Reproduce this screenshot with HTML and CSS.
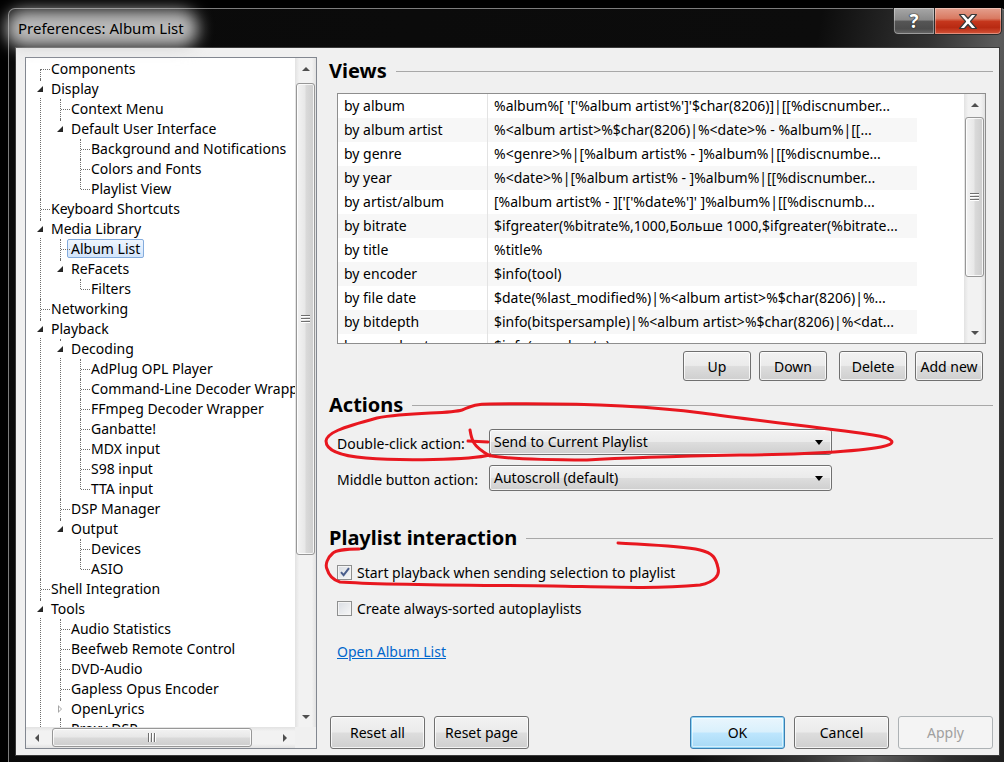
FILE: index.html
```html
<!DOCTYPE html>
<html lang="en">
<head>
    <meta charset="UTF-8">
    <title>Preferences: Album List</title>
    <link rel="stylesheet" href="styles.css">
</head>
<body>
<div class="window">
    <div class="titlebar">
        <div class="caption"><span>Preferences: Album List</span></div>
        <div class="capbtns">
            <div class="cb help">?</div>
            <div class="cb close">
                <svg width="20" height="17" viewBox="0 0 20 17"><path d="M1.5 1.5h5l3.5 4 3.5-4h5l-6 7 6 7h-5l-3.5-4-3.5 4h-5l6-7z" fill="#fff" stroke="#3a3a3a" stroke-width="1.2" stroke-linejoin="round"/></svg>
            </div>
        </div>
    </div>
    <div class="client">
        <!-- page tree -->
        <div class="tree">
            <div class="tree-view">
                <ul class="root">
                    <li><div class="row leaf"><span class="lbl">Components</span></div></li>
                    <li><div class="row"><i class="tw open"></i><span class="lbl">Display</span></div>
                        <ul>
                            <li><div class="row leaf"><span class="lbl">Context Menu</span></div></li>
                            <li><div class="row"><i class="tw open"></i><span class="lbl">Default User Interface</span></div>
                                <ul>
                                    <li><div class="row leaf"><span class="lbl">Background and Notifications</span></div></li>
                                    <li><div class="row leaf"><span class="lbl">Colors and Fonts</span></div></li>
                                    <li><div class="row leaf"><span class="lbl">Playlist View</span></div></li>
                                </ul>
                            </li>
                        </ul>
                    </li>
                    <li><div class="row leaf"><span class="lbl">Keyboard Shortcuts</span></div></li>
                    <li><div class="row"><i class="tw open"></i><span class="lbl">Media Library</span></div>
                        <ul>
                            <li><div class="row leaf"><span class="lbl selected">Album List</span></div></li>
                            <li><div class="row"><i class="tw open"></i><span class="lbl">ReFacets</span></div>
                                <ul>
                                    <li><div class="row leaf"><span class="lbl">Filters</span></div></li>
                                </ul>
                            </li>
                        </ul>
                    </li>
                    <li><div class="row leaf"><span class="lbl">Networking</span></div></li>
                    <li><div class="row"><i class="tw open"></i><span class="lbl">Playback</span></div>
                        <ul>
                            <li><div class="row"><i class="tw open"></i><span class="lbl">Decoding</span></div>
                                <ul>
                                    <li><div class="row leaf"><span class="lbl">AdPlug OPL Player</span></div></li>
                                    <li><div class="row leaf"><span class="lbl">Command-Line Decoder Wrapper</span></div></li>
                                    <li><div class="row leaf"><span class="lbl">FFmpeg Decoder Wrapper</span></div></li>
                                    <li><div class="row leaf"><span class="lbl">Ganbatte!</span></div></li>
                                    <li><div class="row leaf"><span class="lbl">MDX input</span></div></li>
                                    <li><div class="row leaf"><span class="lbl">S98 input</span></div></li>
                                    <li><div class="row leaf"><span class="lbl">TTA input</span></div></li>
                                </ul>
                            </li>
                            <li><div class="row leaf"><span class="lbl">DSP Manager</span></div></li>
                            <li><div class="row"><i class="tw open"></i><span class="lbl">Output</span></div>
                                <ul>
                                    <li><div class="row leaf"><span class="lbl">Devices</span></div></li>
                                    <li><div class="row leaf"><span class="lbl">ASIO</span></div></li>
                                </ul>
                            </li>
                        </ul>
                    </li>
                    <li><div class="row leaf"><span class="lbl">Shell Integration</span></div></li>
                    <li><div class="row"><i class="tw open"></i><span class="lbl">Tools</span></div>
                        <ul>
                            <li><div class="row leaf"><span class="lbl">Audio Statistics</span></div></li>
                            <li><div class="row leaf"><span class="lbl">Beefweb Remote Control</span></div></li>
                            <li><div class="row leaf"><span class="lbl">DVD-Audio</span></div></li>
                            <li><div class="row leaf"><span class="lbl">Gapless Opus Encoder</span></div></li>
                            <li><div class="row"><i class="tw shut"></i><span class="lbl">OpenLyrics</span></div></li>
                            <li><div class="row leaf"><span class="lbl">Proxy DSP</span></div></li>
                            <li><div class="row leaf"><span class="lbl">Waveform Seekbar</span></div></li>
                        </ul>
                    </li>
                    <li><div class="row leaf"><span class="lbl">Visualizations</span></div></li>
                </ul>
            </div>
            <div class="sbv tree-sb">
                <div class="arr"><i class="tri up"></i></div>
                <div class="track"><div class="thumb"><i class="grip"></i></div></div>
                <div class="arr"><i class="tri down"></i></div>
            </div>
            <div class="sbh">
                <div class="arr"><i class="tri left"></i></div>
                <div class="track"><div class="thumb"><i class="grip"></i></div></div>
                <div class="arr"><i class="tri right"></i></div>
            </div>
            <div class="sb-corner"></div>
        </div>

        <!-- Album List page -->
        <div class="page">
            <div class="group-title">Views</div>
            <div class="views">
                <div class="views-rows">
                    <div class="lrow"><span class="c1">by album</span><span class="c2">%album%[ '['%album artist%']'$char(8206)]|[[%discnumber...</span></div>
                    <div class="lrow"><span class="c1">by album artist</span><span class="c2">%&lt;album artist&gt;%$char(8206)|%&lt;date&gt;% - %album%|[[...</span></div>
                    <div class="lrow"><span class="c1">by genre</span><span class="c2">%&lt;genre&gt;%|[%album artist% - ]%album%|[[%discnumbe...</span></div>
                    <div class="lrow"><span class="c1">by year</span><span class="c2">%&lt;date&gt;%|[%album artist% - ]%album%|[[%discnumber...</span></div>
                    <div class="lrow"><span class="c1">by artist/album</span><span class="c2">[%album artist% - ]['['%date%']' ]%album%|[[%discnumb...</span></div>
                    <div class="lrow"><span class="c1">by bitrate</span><span class="c2">$ifgreater(%bitrate%,1000,Больше 1000,$ifgreater(%bitrate...</span></div>
                    <div class="lrow"><span class="c1">by title</span><span class="c2">%title%</span></div>
                    <div class="lrow"><span class="c1">by encoder</span><span class="c2">$info(tool)</span></div>
                    <div class="lrow"><span class="c1">by file date</span><span class="c2">$date(%last_modified%)|%&lt;album artist&gt;%$char(8206)|%...</span></div>
                    <div class="lrow"><span class="c1">by bitdepth</span><span class="c2">$info(bitspersample)|%&lt;album artist&gt;%$char(8206)|%&lt;dat...</span></div>
                    <div class="lrow"><span class="c1">by samplerate</span><span class="c2">$info(samplerate)</span></div>
                </div>
                <div class="sbv views-sb">
                    <div class="arr"><i class="tri up"></i></div>
                    <div class="track"><div class="thumb"><i class="grip"></i></div></div>
                    <div class="arr"><i class="tri down"></i></div>
                </div>
            </div>
            <div class="list-btns">
                <button class="btn">Up</button>
                <button class="btn">Down</button>
                <button class="btn wide-gap">Delete</button>
                <button class="btn">Add new</button>
            </div>

            <div class="group-title actions">Actions</div>
            <div class="field first">
                <span class="field-label">Double-click action:</span>
                <div class="combo">Send to Current Playlist<i class="combo-arrow"></i></div>
            </div>
            <div class="field">
                <span class="field-label">Middle button action:</span>
                <div class="combo">Autoscroll (default)<i class="combo-arrow"></i></div>
            </div>

            <div class="group-title interaction">Playlist interaction</div>
            <div class="check first">
                <span class="box">
                    <svg width="12" height="12" viewBox="0 0 12 12"><path d="M2 6.2 L4.6 9.2 L10 2.2" fill="none" stroke="#4a5e8c" stroke-width="2"/></svg>
                </span>
                Start playback when sending selection to playlist
            </div>
            <div class="check">
                <span class="box"></span>
                Create always-sorted autoplaylists
            </div>
            <a class="link" href="#">Open Album List</a>

            <div class="footer">
                <button class="btn big">Reset all</button>
                <button class="btn big">Reset page</button>
                <span class="spacer"></span>
                <button class="btn big default">OK</button>
                <button class="btn big">Cancel</button>
                <button class="btn big" disabled>Apply</button>
            </div>
        </div>
    </div>
</div>

<!-- red pen marks drawn over the screenshot -->
<svg class="marks" width="1004" height="762" viewBox="0 0 1004 762">
    <g fill="none" stroke="#e8171f" stroke-width="3" stroke-linecap="round" stroke-linejoin="round">
        <path d="M490 455 C470 460,400 461,366 458 C340 456,326 450,326 441 C327 433,340 428,377 418 C410 412,450 414,462 410 C470 407,474 404,490 404 C560 403,640 405,702 413 C760 421,840 430,873 435 C895 438,898 444,881 447 C860 451,800 455,740 455 C690 456,620 458,587 460 C550 460,510 459,492 456"/>
        <path d="M470 430 C471 436,472 440,474 443 C477 448,483 452,490 456"/>
        <path d="M468 441 L488 442"/>
        <path d="M359 549 C345 549,335 551,333 553 C327 558,325 565,327 569 C329 576,333 580,340 582 C380 585,450 585,553 586 C610 587,653 589,700 585 C715 582,720 575,718 568 C716 558,713 553,700 550 C680 546,650 545,618 543"/>
    </g>
</svg>
</body>
</html>
```

FILE: styles.css
```css
* {
    box-sizing: border-box;
}

html, body {
    margin: 0;
    padding: 0;
}

body {
    width: 1004px;
    height: 762px;
    overflow: hidden;
    position: relative;
    background: #000;
    font-family: "Noto Sans", "Open Sans", sans-serif;
    font-size: 14px;
    color: #000;
}

/* window frame */
.window {
    margin: 8px 0 0 8px;
    width: 999px;
    height: 754px;
    border: 1px solid #7c7c7c;
    border-bottom: 0;
    border-radius: 7px 7px 0 0;
    padding: 0 6px 6px 6px;
    display: flex;
    flex-direction: column;
    background: linear-gradient(100deg, #0a0a0a 0%, #0c0c0c 72%, #333 82%, #5c5c5c 88%, #2e2e2e 95%, #1e1e1e 100%);
}

.titlebar {
    flex-shrink: 0;
    height: 38px;
    display: flex;
    justify-content: space-between;
    align-items: flex-start;
}

.caption {
    padding: 9px 0 0 3px;
    font-size: 15px;
    line-height: 20px;
}

.caption span {
    position: relative;
    z-index: 0;
    color: #000;
}

.caption span::before {
    content: '';
    position: absolute;
    left: -12px;
    right: -14px;
    top: -8px;
    bottom: -9px;
    background: rgba(205, 205, 205, 0.9);
    border-radius: 18px;
    filter: blur(8px);
    z-index: -1;
}

.capbtns {
    display: flex;
    margin-top: -1px;
    margin-right: -2px;
}

.cb {
    height: 27px;
    border: 1px solid #2a2a2a;
    border-top: 0;
    display: flex;
    align-items: center;
    justify-content: center;
    box-shadow: inset 0 0 0 1px rgba(255, 255, 255, 0.35);
}

.help {
    width: 41px;
    border-radius: 0 0 0 5px;
    border-right: 0;
    background: linear-gradient(#a7a7a7 0%, #8a8a8a 45%, #555 52%, #4c4c4c 80%, #6a6a6a 100%);
    color: #fff;
    font-weight: bold;
    font-size: 19px;
    text-shadow: 0 0 1px #222, 0 0 1px #222, 0 0 1px #222;
}

.close {
    width: 68px;
    border-radius: 0 0 5px 0;
    background: linear-gradient(#e4a08e 0%, #d97a62 40%, #c5361c 52%, #b82a12 75%, #d4553a 100%);
}

/* client area */
.client {
    flex: 1;
    min-height: 0;
    border: 1px solid #3a3a3a;
    background: #f0f0f0;
    display: grid;
    grid-template-columns: 292px 1fr;
    grid-template-rows: minmax(0, 1fr);
    column-gap: 12px;
    padding: 9px 6px 6px 9px;
}

/* tree */
.tree {
    border: 1px solid #828790;
    background: #fff;
    display: grid;
    grid-template-columns: minmax(0, 1fr) 21px;
    grid-template-rows: minmax(0, 1fr) 21px;
    overflow: hidden;
}

.tree-view {
    overflow: hidden;
    position: relative;
    padding-top: 1px;
}

.tree-view ul {
    list-style: none;
    margin: 0;
    padding: 0;
}

.tree-view ul ul {
    margin-left: 20px;
}

.tree-view li {
    position: relative;
}

.tree-view li::before {
    content: '';
    position: absolute;
    left: 14px;
    top: 0;
    bottom: 0;
    border-left: 1px dotted #6e6e6e;
}

.tree-view li:last-child::before {
    bottom: auto;
    height: 10px;
}

.tree-view .root > li:first-child::before {
    top: 10px;
}

.row {
    position: relative;
    height: 20px;
    line-height: 20px;
    padding-left: 25px;
    white-space: nowrap;
}

.row.leaf::before {
    content: '';
    position: absolute;
    left: 15px;
    top: 10px;
    width: 9px;
    border-top: 1px dotted #6e6e6e;
}

.tw {
    position: absolute;
    left: 6px;
    top: 2px;
    width: 16px;
    height: 16px;
    background: #fff;
}

.tw.open::after {
    content: '';
    position: absolute;
    left: 5px;
    top: 5px;
    width: 6px;
    height: 6px;
    background: #262626;
    clip-path: polygon(100% 0, 100% 100%, 0 100%);
}

.tw.shut::after {
    content: '';
    position: absolute;
    left: 6px;
    top: 4px;
    width: 0;
    height: 0;
    border-top: 4px solid transparent;
    border-bottom: 4px solid transparent;
    border-left: 4px solid #a6a6a6;
}

.tw.shut::before {
    content: '';
    position: absolute;
    left: 7px;
    top: 6px;
    width: 0;
    height: 0;
    border-top: 2px solid transparent;
    border-bottom: 2px solid transparent;
    border-left: 2px solid #fff;
    z-index: 1;
}

.lbl {
    display: inline-block;
    height: 19px;
    line-height: 18px;
    padding: 0 3px;
    margin-left: -4px;
    border: 1px solid transparent;
    border-radius: 2px;
}

.lbl.selected {
    border-color: #84acdd;
    background: linear-gradient(#eef5fe, #d3e5fb);
}

/* scrollbars */
.sbv, .sbh {
    display: flex;
    min-height: 0;
    min-width: 0;
    background: linear-gradient(to right, #e2e2e2, #f2f2f2 20%, #f2f2f2 80%, #e2e2e2);
}

.sbv {
    flex-direction: column;
}

.sbh {
    background: linear-gradient(#e2e2e2, #f2f2f2 20%, #f2f2f2 80%, #e2e2e2);
}

.sbv .arr {
    height: 21px;
    flex-shrink: 0;
    display: flex;
    align-items: center;
    justify-content: center;
}

.sbh .arr {
    width: 21px;
    flex-shrink: 0;
    display: flex;
    align-items: center;
    justify-content: center;
}

.sbv .track, .sbh .track {
    flex: 1;
    min-height: 0;
    min-width: 0;
    display: flex;
}

.sbv .track {
    flex-direction: column;
}

.thumb {
    border: 1px solid #979797;
    border-radius: 3px;
    display: flex;
    align-items: center;
    justify-content: center;
    box-shadow: inset 0 0 0 1px rgba(255, 255, 255, 0.8);
}

.sbv .thumb {
    margin: 0 1px;
    background: linear-gradient(to right, #f3f3f3, #e8e8e8 45%, #d9d9d9 55%, #cdcdcd);
}

.sbh .thumb {
    margin: 1px 0;
    background: linear-gradient(#f3f3f3, #e8e8e8 45%, #d9d9d9 55%, #cdcdcd);
}

.tree-sb .thumb {
    margin-top: 4px;
    height: 472px;
}

.sbh .thumb {
    margin-left: 5px;
    width: 200px;
}

.views-sb .thumb {
    margin-top: 2px;
    height: 160px;
}

.grip {
    display: block;
}

.sbv .grip {
    width: 9px;
    height: 8px;
    background: linear-gradient(#6f6f6f 0 1px, #fff 1px 2px, transparent 2px 3px, #6f6f6f 3px 4px, #fff 4px 5px, transparent 5px 6px, #6f6f6f 6px 7px, #fff 7px 8px);
}

.sbh .grip {
    width: 8px;
    height: 9px;
    background: linear-gradient(to right, #6f6f6f 0 1px, #fff 1px 2px, transparent 2px 3px, #6f6f6f 3px 4px, #fff 4px 5px, transparent 5px 6px, #6f6f6f 6px 7px, #fff 7px 8px);
}

.tri {
    display: block;
    width: 0;
    height: 0;
}

.tri.up {
    border-left: 4px solid transparent;
    border-right: 4px solid transparent;
    border-bottom: 4px solid #4f4f4f;
}

.tri.down {
    border-left: 4px solid transparent;
    border-right: 4px solid transparent;
    border-top: 4px solid #4f4f4f;
}

.tri.left {
    border-top: 4px solid transparent;
    border-bottom: 4px solid transparent;
    border-right: 4px solid #4f4f4f;
}

.tri.right {
    border-top: 4px solid transparent;
    border-bottom: 4px solid transparent;
    border-left: 4px solid #4f4f4f;
}

.sb-corner {
    background: #f0f0f0;
}

/* right page */
.page {
    display: flex;
    flex-direction: column;
    min-width: 0;
    min-height: 0;
}

.group-title {
    flex-shrink: 0;
    height: 28px;
    display: flex;
    align-items: center;
    gap: 9px;
    font-weight: bold;
    font-size: 20px;
    line-height: 28px;
}

.group-title::after {
    content: '';
    flex: 1;
    border-top: 1px solid #a8a8a8;
    margin-top: 1px;
}

.views {
    flex-shrink: 0;
    margin: 8px 7px 0 8px;
    height: 251px;
    border: 1px solid #8e8e8e;
    background: #fff;
    display: flex;
}

.views-rows {
    flex: 1;
    overflow: hidden;
}

.lrow {
    display: flex;
    width: 579px;
    height: 24px;
    line-height: 24px;
    white-space: nowrap;
}

.lrow:nth-child(even) {
    background: #f7f7f7;
}

.lrow .c1 {
    width: 150px;
    padding-left: 6px;
    border-right: 1px solid #e3e3e3;
}

.lrow .c2 {
    width: 429px;
    padding-left: 6px;
    overflow: hidden;
}

.views-sb {
    width: 21px;
}

.list-btns {
    flex-shrink: 0;
    display: flex;
    justify-content: flex-end;
    gap: 8px;
    margin: 7px 10px 0 0;
}

.btn {
    flex-shrink: 0;
    height: 30px;
    width: 68px;
    border: 1px solid #707070;
    border-radius: 3px;
    background: linear-gradient(#f2f2f2 0%, #ebebeb 48%, #dddddd 52%, #cfcfcf 100%);
    box-shadow: inset 0 0 0 1px rgba(255, 255, 255, 0.75);
    font-family: "Noto Sans", "Open Sans", sans-serif;
    font-size: 14px;
    color: #000;
    padding: 0;
}

.btn.wide-gap {
    margin-left: 4px;
}

.btn.big {
    width: 95px;
    height: 33px;
}

.btn.default {
    border-color: #3c7fb1;
    box-shadow: inset 0 0 0 1px #8fd4f5, inset 0 0 0 2px rgba(255, 255, 255, 0.5);
    background: linear-gradient(#eaf6fd 0%, #d9f0fc 48%, #bee6fd 52%, #a7d9f5 100%);
}

.btn:disabled {
    border-color: #adb2b5;
    background: #f4f4f4;
    box-shadow: none;
    color: #a0a0a0;
}

.group-title.actions {
    margin-top: 10px;
}

.field {
    flex-shrink: 0;
    display: flex;
    align-items: center;
    height: 26px;
    margin-top: 10px;
    padding-left: 8px;
}

.field.first {
    margin-top: 10px;
}

.field-label {
    width: 152px;
    padding-top: 3px;
}

.combo {
    position: relative;
    width: 343px;
    height: 26px;
    line-height: 24px;
    padding-left: 4px;
    border: 1px solid #707070;
    border-radius: 3px;
    background: linear-gradient(#f2f2f2 0%, #ebebeb 48%, #dddddd 52%, #cfcfcf 100%);
    box-shadow: inset 0 0 0 1px rgba(255, 255, 255, 0.75);
}

.combo-arrow {
    position: absolute;
    right: 8px;
    top: 10px;
    width: 0;
    height: 0;
    border-left: 4px solid transparent;
    border-right: 4px solid transparent;
    border-top: 5px solid #000;
}

.group-title.interaction {
    margin-top: 33px;
}

.check {
    flex-shrink: 0;
    display: flex;
    align-items: center;
    gap: 5px;
    height: 20px;
    margin-top: 16px;
    padding-left: 8px;
}

.check.first {
    margin-top: 10px;
}

.box {
    width: 15px;
    height: 15px;
    border: 1px solid #8e8f8f;
    background: linear-gradient(135deg, #d9dde3, #f7f7f7);
    box-shadow: inset 0 0 0 1px #f4f4f4;
    display: flex;
    align-items: center;
    justify-content: center;
}

.link {
    align-self: flex-start;
    margin: 24px 0 0 8px;
    line-height: 20px;
    color: #0066cc;
    text-decoration: underline;
}

.footer {
    margin-top: auto;
    display: flex;
    gap: 9px;
    padding-left: 1px;
}

.footer .spacer {
    flex: 1;
}

/* pen marks layer */
.marks {
    position: absolute;
    left: 0;
    top: 0;
    pointer-events: none;
}
```
